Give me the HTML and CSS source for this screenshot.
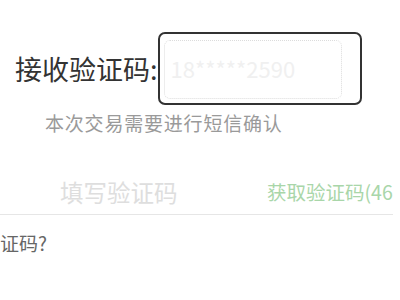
FILE: index.html
```html
<!DOCTYPE html>
<html lang="zh-CN">
<head>
    <meta charset="UTF-8">
    <title>短信确认</title>
    <link rel="stylesheet" href="styles.css">
</head>
<body>
    <div class="page">
        <div class="head">
            <span class="head-label">接收验证码:</span>
            <div class="phone">
                <div class="phone-inner">18*****2590</div>
            </div>
        </div>
        <div class="hint">本次交易需要进行短信确认</div>
        <div class="code-row">
            <span class="code-input">填写验证码</span>
            <span class="code-btn">获取验证码(46</span>
        </div>
        <div class="help">证码?</div>
    </div>
</body>
</html>
```

FILE: styles.css
```css
body {
    margin: 0;
    background: #fff;
    font-family: "Noto Sans CJK SC", "Noto Sans", sans-serif;
    overflow: hidden;
}
.page {
    width: 400px;
    height: 300px;
    overflow: hidden;
}
.head {
    display: flex;
    align-items: center;
    padding: 32px 0 0 15px;
    white-space: nowrap;
}
.head-label {
    font-size: 27px;
    color: #333;
}
.phone {
    width: 204px;
    height: 73px;
    border: 2px solid #333;
    border-radius: 7px;
    padding: 6px 18px 6px 4px;
    box-sizing: border-box;
    flex-shrink: 0;
}
.phone-inner {
    height: 100%;
    border: 1px dotted #dcdcdc;
    border-radius: 6px;
    color: #f0f0f0;
    font-size: 22px;
    line-height: 55px;
    padding-left: 6px;
}
.hint {
    margin: 4px 0 0 45px;
    font-size: 19px;
    color: #9a9a9a;
    letter-spacing: 0.8px;
}
.code-row {
    display: flex;
    align-items: center;
    width: 393px;
    height: 46px;
    margin-top: 33px;
    border-bottom: 1px solid #e6e6e6;
    box-sizing: border-box;
    white-space: nowrap;
}
.code-input {
    margin-left: 60px;
    font-size: 23.5px;
    color: #dedede;
    width: 207px;
    flex-shrink: 0;
}
.code-btn {
    font-size: 19.5px;
    color: #a9d6a9;
}
.help {
    margin-top: 14px;
    font-size: 19px;
    color: #666;
}
```
